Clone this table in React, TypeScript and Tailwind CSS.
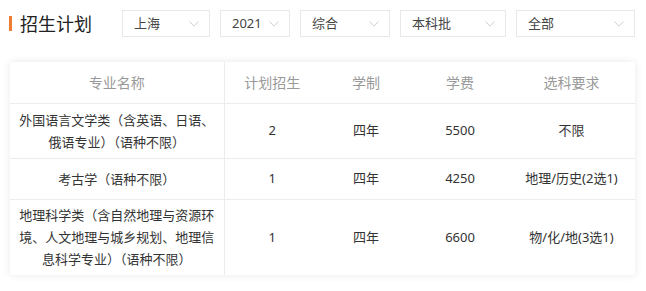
import React from "react";

type Row = {
  name: string[];
  count: string;
  years: string;
  fee: string;
  subjects: string;
  height: string;
};

const rows: Row[] = [
  {
    name: ["外国语言文学类（含英语、日语、", "俄语专业）（语种不限）"],
    count: "2",
    years: "四年",
    fee: "5500",
    subjects: "不限",
    height: "h-[55px]",
  },
  {
    name: ["考古学（语种不限）"],
    count: "1",
    years: "四年",
    fee: "4250",
    subjects: "地理/历史(2选1)",
    height: "h-[41px]",
  },
  {
    name: [
      "地理科学类（含自然地理与资源环",
      "境、人文地理与城乡规划、地理信",
      "息科学专业）（语种不限）",
    ],
    count: "1",
    years: "四年",
    fee: "6600",
    subjects: "物/化/地(3选1)",
    height: "h-[76px]",
  },
];

function Chevron() {
  return (
    <svg width="10" height="6" viewBox="0 0 10 6" className="shrink-0">
      <polyline
        points="0.5,0.5 5,5.2 9.5,0.5"
        fill="none"
        stroke="#cfcfcf"
        strokeWidth="1"
      />
    </svg>
  );
}

function Select({ label, width }: { label: string; width: string }) {
  return (
    <div
      className={`flex h-[27px] items-center justify-between border border-[#e8e8e8] bg-white pl-[11px] pr-[10px] text-[13px] text-[#444] ${width}`}
    >
      <span>{label}</span>
      <Chevron />
    </div>
  );
}

export default function App() {
  return (
    <div className="h-[291px] w-[646px] bg-white pt-[10px] font-['Noto_Sans','Noto_Sans_CJK_SC',sans-serif]">
      <div className="flex h-[27px] items-center pl-[9px]">
        <span className="mr-[8px] h-[15px] w-[3px] bg-[#ee7d32]" />
        <h2 className="w-[102px] text-[18px] leading-none text-[#222]">
          招生计划
        </h2>
        <div className="flex gap-[10px]">
          <Select label="上海" width="w-[88px]" />
          <Select label="2021" width="w-[70px]" />
          <Select label="综合" width="w-[90px]" />
          <Select label="本科批" width="w-[106px]" />
          <Select label="全部" width="w-[119px]" />
        </div>
      </div>

      <div className="ml-[10px] mt-[25px] w-[625px] overflow-hidden rounded-[3px] bg-white shadow-[0_0_8px_rgba(0,0,0,0.09)]">
        <table className="w-full table-fixed border-collapse text-center text-[13px] text-[#333]">
          <colgroup>
            <col className="w-[214px]" />
            <col className="w-[96px]" />
            <col className="w-[92px]" />
            <col className="w-[96px]" />
            <col className="w-[127px]" />
          </colgroup>
          <thead>
            <tr className="h-[41px] text-[14px] font-normal text-[#999]">
              <th className="border-r border-[#ececec] font-normal">专业名称</th>
              <th className="font-normal">计划招生</th>
              <th className="font-normal">学制</th>
              <th className="font-normal">学费</th>
              <th className="font-normal">选科要求</th>
            </tr>
          </thead>
          <tbody>
            {rows.map((row) => (
              <tr key={row.fee} className={`${row.height} border-t border-[#ececec]`}>
                <td className="border-r border-[#ececec] leading-[22px]">
                  {row.name.map((line) => (
                    <div key={line} className="whitespace-nowrap">
                      {line}
                    </div>
                  ))}
                </td>
                <td>{row.count}</td>
                <td>{row.years}</td>
                <td>{row.fee}</td>
                <td className="whitespace-nowrap">{row.subjects}</td>
              </tr>
            ))}
          </tbody>
        </table>
      </div>
    </div>
  );
}
